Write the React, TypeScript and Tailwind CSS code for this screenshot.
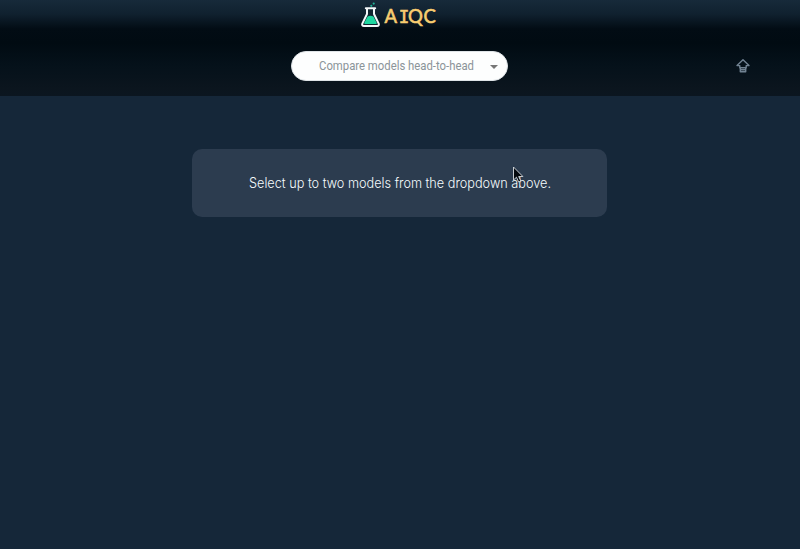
function Logo() {
  return (
    <div className="flex h-[30px] items-center justify-center pr-0.5">
      <svg viewBox="0 0 78 30" className="h-[30px] w-[78px] overflow-visible" fill="none" aria-label="AIQC">
        <path d="M7 8.5v5.5L2.3 23.6Q1.6 26 4 26h13q2.4 0 1.7-2.4L14 14V8.5" fill="#10242f" stroke="#f4f8fa" strokeWidth="2" strokeLinejoin="round" />
        <path d="M5.8 8.2h9.4" stroke="#f4f8fa" strokeWidth="2" strokeLinecap="round" />
        <path d="M7.6 16.5q2.8-1.6 5.8 0l3.3 6.3q.5 1.3-.8 1.3h-10.8q-1.3 0-.8-1.3Z" fill="#1fd6a0" />
        <circle cx="11.3" cy="5.8" r="1.1" fill="#1fae93" />
        <circle cx="13.7" cy="3.6" r="1.1" fill="#1fae93" />
        <text y="23.4" className="fill-[#f8cd70] stroke-[#f8cd70] font-['Lato',sans-serif] text-[18.5px] font-normal" strokeWidth="0.6">
          <tspan x="24.6">A</tspan>
          <tspan x="38.7" className="font-['DejaVu_Sans_Mono',monospace] text-[17.5px]">I</tspan>
          <tspan x="47.9">Q</tspan>
          <tspan x="63.6">C</tspan>
        </text>
      </svg>
    </div>
  );
}

function UploadIcon() {
  return (
    <svg viewBox="0 0 16 16" className="size-4" fill="none" stroke="#718292" strokeWidth="1.4" strokeLinejoin="round">
      <path d="M8 1.8 14 7.6h-2.8v2.2H4.8V7.6H2Z" />
      <path d="M5.3 9.8v4h5.4v-4M6 11.8h4" />
    </svg>
  );
}

function Cursor() {
  return (
    <svg viewBox="0 0 12 18" className="absolute left-[512px] top-[166px] h-[18px] w-3">
      <path d="M1.5 1v13l3-2.8 2.1 4.8 2.2-1-2.1-4.5h4.2Z" fill="#050a0f" stroke="#d9dee2" strokeWidth="0.9" />
    </svg>
  );
}

export default function App() {
  return (
    <div className="relative flex h-[549px] w-[800px] flex-col bg-[#152739]">
      <header className="flex h-24 flex-col bg-[linear-gradient(180deg,#172a3a_0px,#10212f_14px,#020c14_29px,#010b12_43px,#05111a_65px,#0b151e_88px,#0b1620_96px)]">
        <Logo />
        <div className="mt-[21px] grid grid-cols-[291px_217px_1fr] items-center">
          <button className="col-start-2 flex h-[30px] items-center justify-end rounded-full border border-[#dfe4e7] bg-[#fdfefe] pr-[9px]">
            <svg viewBox="0 0 155 20" className="mr-4 h-5 w-[155px] overflow-visible">
              <text x="0" y="14" textLength="155" lengthAdjust="spacingAndGlyphs" className="fill-[#8b9499] font-['Roboto',sans-serif] text-[13.5px]">Compare models head-to-head</text>
            </svg>
            <span className="mt-0.5 border-x-4 border-t-4 border-x-transparent border-t-[#777]" />
          </button>
          <div className="flex justify-end pr-[49px]"><UploadIcon /></div>
        </div>
      </header>
      <main className="flex pl-48 pt-[53px]">
        <section className="flex h-[68px] w-[415px] items-center justify-center rounded-[10px] bg-[#2c3c4f]">
          <svg viewBox="0 0 302 20" className="h-5 w-[302px] overflow-visible">
            <text x="0" y="15" textLength="302" lengthAdjust="spacingAndGlyphs" className="fill-[#f5fbfd] font-['Inter',sans-serif] text-[14px] font-light">Select up to two models from the dropdown above.</text>
          </svg>
        </section>
      </main>
      <Cursor />
    </div>
  );
}
